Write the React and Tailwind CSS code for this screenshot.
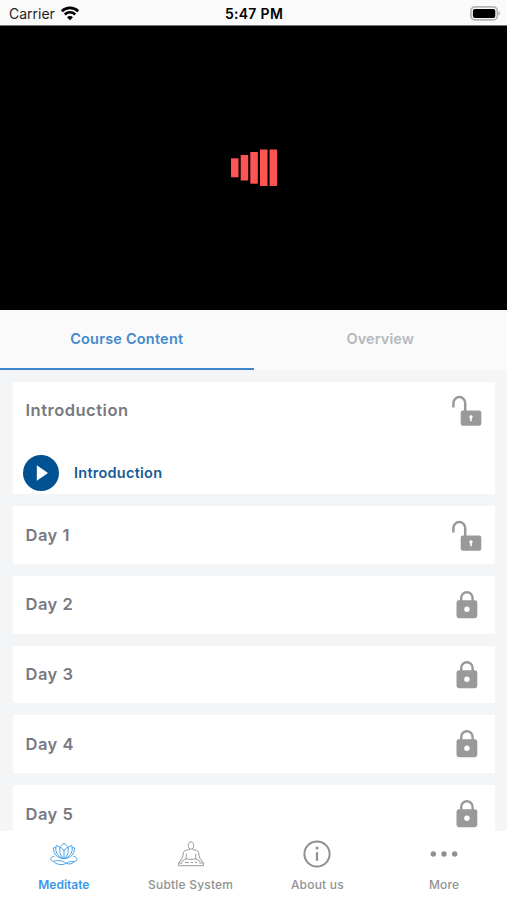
const lessons = [
  { title: "Introduction", unlocked: true, items: ["Introduction"] },
  { title: "Day 1", unlocked: true, items: [] },
  { title: "Day 2", unlocked: false, items: [] },
  { title: "Day 3", unlocked: false, items: [] },
  { title: "Day 4", unlocked: false, items: [] },
  { title: "Day 5", unlocked: false, items: [] },
];

function WifiIcon() {
  return (
    <svg width="20" height="15" viewBox="0 0 20 15" fill="none">
      <path d="M1.8 5.2a11.7 11.7 0 0 1 16.4 0" stroke="#000" strokeWidth="2.6" />
      <path d="M4.8 8.5a7.4 7.4 0 0 1 10.4 0" stroke="#000" strokeWidth="2.5" />
      <path d="M10 14.2 7 11.2a4.2 4.2 0 0 1 6 0Z" fill="#000" />
    </svg>
  );
}

function BatteryIcon() {
  return (
    <svg width="31" height="15" viewBox="0 0 31 15">
      <rect x="0.9" y="0.9" width="26.4" height="13" rx="4" fill="#fafafa" stroke="#b5b5b5" strokeWidth="1.7" />
      <rect x="2.9" y="2.9" width="22.4" height="9" rx="2" fill="#000" />
      <path d="M28.4 5.2c2.2.8 2.2 3.6 0 4.4Z" fill="#b5b5b5" />
    </svg>
  );
}

function UnlockedIcon() {
  return (
    <svg width="30" height="31" viewBox="0 0 30 31" fill="none">
      <path d="M1.4 12.5V8a5.9 5.9 0 0 1 11.8 0v9" stroke="#999" strokeWidth="2.5" />
      <rect x="8.7" y="15.5" width="20.6" height="15.2" rx="2.2" fill="#999" />
      <path d="M19 20.3a1.7 1.7 0 0 1 .8 3.2v2.8h-1.6v-2.8a1.7 1.7 0 0 1 .8-3.2Z" fill="#fff" />
    </svg>
  );
}

function LockedIcon() {
  return (
    <svg width="22" height="28" viewBox="0 0 22 28" fill="none">
      <path d="M5.2 11V7a5.7 5.7 0 0 1 11.4 0v4" stroke="#999" strokeWidth="2.4" />
      <rect x="0.5" y="9.3" width="20.8" height="17.9" rx="2.4" fill="#999" />
      <circle cx="10.9" cy="18.2" r="2.7" fill="#fff" />
    </svg>
  );
}

function LotusIcon() {
  return (
    <svg width="28" height="24" viewBox="0 0 28 24" fill="none" stroke="#4aa3ea" strokeWidth="1" strokeLinejoin="round">
      <path d="M14 1.2c-1.8 1.3-3.100 2.700-3.900 4.300 2 .7 3.300 1.900 3.900 3.700.6-1.800 1.900-3 3.900-3.700-.8-1.600-2.100-3-3.900-4.300Z" />
      <path d="M10.100 5.500C8.900 4.500 7.600 3.900 6.200 3.500c-.5 1.800-.6 3.500-.3 5.200M17.900 5.500c1.200-1 2.500-1.600 3.900-2 .5 1.800.6 3.500.3 5.200" />
      <path d="M6 5.800c-.8-.2-1.700-.2-2.600 0-.2 5.600 3.400 10.400 10.600 10.900 7.200-.5 10.800-5.300 10.600-10.900-.9-.2-1.800-.2-2.600 0" />
      <path d="M10.100 5.500c-1 4.400.3 8.300 3.900 11.200 3.600-2.900 4.900-6.800 3.900-11.200M14 9.200v7.500" />
      <path d="M5.900 8.700c.9 3.700 3.600 6.800 8.100 8M22.100 8.700c-.9 3.700-3.600 6.800-8.100 8" />
      <path d="M4.400 14.200C-.3 15.200-.5 18.600 3.600 19.400c1.900 3.100 9 4.200 12.500 2 3.600 1.100 6.900.4 8-1.700 4-.8 3.900-4.500-.5-5.500" />
      <path d="M3.600 19.400c3.300-1.500 9-1.100 12.500 2 1.900-1.700 4.700-2.300 8-1.700" />
    </svg>
  );
}

function MeditationIcon() {
  return (
    <svg width="28" height="26" viewBox="0 0 28 26" fill="none" stroke="#999" strokeWidth="1" strokeLinejoin="round">
      <path d="M11.300 4.100c0-4.300 5.400-4.300 5.400 0 0 2.200-.8 4.100-2.700 4.100s-2.700-1.900-2.700-4.100Z" />
      <path d="M12.300 7.700v.9c-2.500.4-5.300.6-5.800 2.800-.4 2.200-.7 4.400-1.500 6.100L1.600 22M15.700 7.700v.9c2.500.4 5.300.6 5.800 2.800.4 2.200.7 4.400 1.500 6.100l3.400 4.500" />
      <path d="M9.300 12.800c.3 1.700.2 3.300-.3 4.900l-4.400 3M18.700 12.800c-.3 1.700-.2 3.300.3 4.900l4.400 3" />
      <path d="M9 17.700c3.200 1 6.800 1 10 0" />
      <path d="M1.600 22v2.700h24.800V22h-4M1.600 22h4" />
      <path d="M8 21.500h4m2 0h2m2 0h2" />
    </svg>
  );
}

function InfoIcon() {
  return (
    <svg width="28" height="28" viewBox="0 0 28 28" fill="none">
      <circle cx="14" cy="14" r="12.6" stroke="#8f8f8f" strokeWidth="2" />
      <path d="M14 12.2v8.6" stroke="#8f8f8f" strokeWidth="2.2" />
      <circle cx="14" cy="8" r="1.5" fill="#8f8f8f" />
    </svg>
  );
}

function MoreIcon() {
  return (
    <svg width="28" height="28" viewBox="0 0 28 28" fill="#8f8f8f">
      <circle cx="3.3" cy="14" r="2.7" />
      <circle cx="14" cy="14" r="2.7" />
      <circle cx="24.7" cy="14" r="2.7" />
    </svg>
  );
}

const navItems = [
  { label: "Meditate", icon: LotusIcon, active: true },
  { label: "Subtle System", icon: MeditationIcon },
  { label: "About us", icon: InfoIcon },
  { label: "More", icon: MoreIcon },
];

function StatusBar() {
  return (
    <div className="grid h-[26px] shrink-0 grid-cols-3 items-center border-b border-[#777] bg-[#fafafa] text-[14px] text-black">
      <div className="flex items-center gap-[5px] pt-[2px] pl-[9px] text-[#222]">
        <span>Carrier</span>
        <WifiIcon />
      </div>
      <div className="pt-[2px] pl-px text-center font-semibold tracking-[0.3px]">5:47 PM</div>
      <div className="flex justify-end pt-[2px] pr-[6px]">
        <BatteryIcon />
      </div>
    </div>
  );
}

function VideoPanel() {
  return (
    <div className="flex h-[284px] shrink-0 items-center justify-center bg-black pl-[2px]">
      <svg width="47" height="38" viewBox="0 0 47 38" fill="#ff5454">
        <rect x="0" y="9.3" width="7.5" height="19" />
        <rect x="9.7" y="6" width="7.5" height="25.5" />
        <rect x="19.3" y="3" width="7.5" height="31.7" />
        <rect x="29" y="0.5" width="7.5" height="36.5" />
        <rect x="38.6" y="0.5" width="7.5" height="36.5" />
      </svg>
    </div>
  );
}

function LessonCard({ lesson }) {
  return (
    <div className="shrink-0 bg-white">
      <div className="flex h-[57.7px] items-center justify-between pr-[13px] pl-[12.5px]">
        <h2 className="text-[16.5px] font-semibold tracking-[0.5px] text-[#777a82]">
          {lesson.title}
        </h2>
        {lesson.unlocked ? (
          <UnlockedIcon />
        ) : (
          <div className="pr-[4px]">
            <LockedIcon />
          </div>
        )}
      </div>
      {lesson.items.map((item) => (
        <div key={item} className="flex items-center gap-[15px] pt-[15.3px] pb-[3.3px] pl-[10px]">
          <svg width="36" height="36" viewBox="0 0 36 36">
            <circle cx="18" cy="18" r="18" fill="#005292" />
            <path d="M13.8 10.2v15.6L25 18Z" fill="#fff" />
          </svg>
          <span className="text-[14.5px] font-semibold tracking-[0.25px] text-[#175a96]">{item}</span>
        </div>
      ))}
    </div>
  );
}

export default function App() {
  return (
    <div className="flex h-[900px] w-full flex-col overflow-hidden bg-white font-['Inter','Liberation_Sans',sans-serif]">
      <StatusBar />
      <VideoPanel />

      {/* Tabs */}
      <div className="grid h-[60px] shrink-0 grid-cols-2 bg-[#fafafa] text-[14.5px] font-semibold">
        <button className="border-b-2 border-[#3c87c9] tracking-[0.2px] text-[#4389cb]">
          Course Content
        </button>
        <button className="border-b-2 border-transparent tracking-[0.1px] text-[#b5b9bf]">
          Overview
        </button>
      </div>

      {/* Lessons */}
      <div className="flex min-h-0 flex-1 flex-col gap-[12px] overflow-hidden bg-[#f3f5f7] pt-[12px] pr-[12px] pl-[13px]">
        {lessons.map((lesson) => (
          <LessonCard key={lesson.title} lesson={lesson} />
        ))}
      </div>

      {/* Bottom navigation */}
      <nav className="grid h-[69px] shrink-0 grid-cols-4 bg-white">
        {navItems.map(({ label, icon: Icon, active }) => (
          <button key={label} className="flex flex-col items-center pt-[9px] pl-px">
            <span className="flex h-[28px] items-center">
              <Icon />
            </span>
            <span
              className={`mt-[8px] text-[12px] leading-[18px] ${
                active
                  ? "font-semibold text-[#3799e8]"
                  : "font-medium tracking-[0.2px] text-[#929292]"
              }`}
            >
              {label}
            </span>
          </button>
        ))}
      </nav>
    </div>
  );
}
